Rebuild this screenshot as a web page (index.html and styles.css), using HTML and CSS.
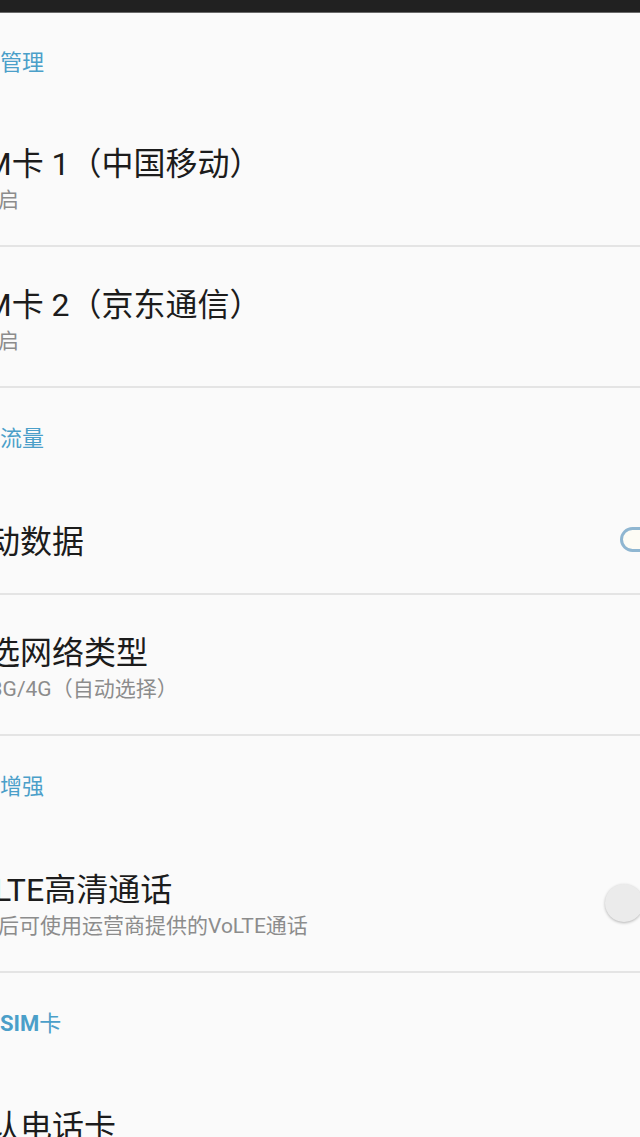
FILE: index.html
```html
<!DOCTYPE html>
<html lang="zh-CN">
<head>
<meta charset="utf-8">
<title>SIM卡与移动数据</title>
<link rel="stylesheet" href="styles.css">
</head>
<body>
<div class="statusbar"></div>
<main class="list">
  <div class="header first"><span class="shift">双卡管理</span></div>
  <div class="row two">
    <div class="shift text">
      <div class="title">SIM卡 1（中国移动）</div>
      <div class="sub">已开启</div>
    </div>
  </div>
  <div class="row two">
    <div class="shift text">
      <div class="title">SIM卡 2（京东通信）</div>
      <div class="sub">已开启</div>
    </div>
  </div>

  <div class="header"><span class="shift">数据流量</span></div>
  <div class="row one">
    <div class="shift text">
      <div class="title">移动数据</div>
    </div>
    <div class="switch-on"><span class="track-on"></span></div>
  </div>
  <div class="row two">
    <div class="shift text">
      <div class="title">首选网络类型</div>
      <div class="sub">2G/3G/4G（自动选择）</div>
    </div>
  </div>

  <div class="header"><span class="shift">通话增强</span></div>
  <div class="row two">
    <div class="shift text">
      <div class="title">VoLTE高清通话</div>
      <div class="sub">开启后可使用运营商提供的VoLTE通话</div>
    </div>
    <div class="switch-off"><span class="knob"></span></div>
  </div>

  <div class="header"><span class="shift">默认<b class="latin">SIM</b>卡</span></div>
  <div class="row two">
    <div class="shift text">
      <div class="title">默认电话卡</div>
      <div class="sub">SIM卡 1</div>
    </div>
  </div>
</main>
</body>
</html>
```

FILE: styles.css
```css
html, body {
  margin: 0;
  padding: 0;
}
body {
  background: #fafafa;
  font-family: "Roboto", "Noto Sans CJK SC", sans-serif;
  width: 640px;
  height: 1137px;
  overflow: hidden;
}
.statusbar {
  height: 12px;
  background: #212121;
  border-bottom: 1px solid #6a6a6a;
}
.list {
  display: flex;
  flex-direction: column;
}
.shift {
  margin-left: -44px;
}
.header {
  height: 96px;
  display: flex;
  align-items: center;
  font-size: 22px;
  color: #4b9fc9;
}
.header.first {
  height: 93px;
}
.header .latin {
  font-weight: 700;
}
.row {
  display: flex;
  align-items: flex-start;
  border-bottom: 2px solid #e4e4e4;
}
.row.two {
  height: 139px;
}
.row.one {
  height: 109px;
}
.text {
  flex: 1;
  padding-top: 38px;
  white-space: nowrap;
}
.title {
  font-size: 32px;
  line-height: 40px;
  color: #1c1c1c;
}
.sub {
  font-size: 21px;
  line-height: 32px;
  color: #8c8c8c;
}
.switch-on {
  align-self: center;
  margin-top: 2px;
  width: 52px;
  margin-right: -32px;
  display: flex;
}
.track-on {
  width: 52px;
  height: 25px;
  box-sizing: border-box;
  border: 3px solid #8fb6d1;
  border-radius: 13px;
  background: #fdfcf5;
}
.switch-off {
  align-self: center;
  margin-top: 2px;
  width: 40px;
  margin-right: -5px;
  display: flex;
}
.knob {
  width: 38px;
  height: 38px;
  border-radius: 50%;
  background: #ebebeb;
  box-shadow: 0 1px 3px rgba(0, 0, 0, 0.28);
}
```
